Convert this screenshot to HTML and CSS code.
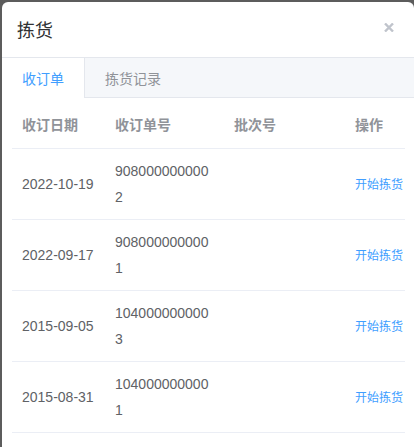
FILE: index.html
```html
<!DOCTYPE html>
<html lang="zh-CN">
<head>
    <meta charset="UTF-8">
    <meta name="viewport" content="width=device-width, initial-scale=1.0">
    <title>拣货</title>
    <link rel="stylesheet" href="styles.css">
</head>
<body>
    <div class="dialog">
        <div class="dialog-header">
            <span class="dialog-title">拣货</span>
            <button class="dialog-close" type="button" aria-label="关闭">
                <svg width="10" height="9" viewBox="0 0 10 9">
                    <path d="M1 0.5 L9 8.5 M9 0.5 L1 8.5" stroke="#c0c4cc" stroke-width="2.4" fill="none"/>
                </svg>
            </button>
        </div>

        <div class="tabs">
            <div class="tab active">收订单</div>
            <div class="tab">拣货记录</div>
        </div>

        <div class="dialog-body">
            <table class="order-table">
                <colgroup>
                    <col class="col-date">
                    <col class="col-no">
                    <col class="col-batch">
                    <col class="col-op">
                </colgroup>
                <thead>
                    <tr>
                        <th>收订日期</th>
                        <th>收订单号</th>
                        <th>批次号</th>
                        <th>操作</th>
                    </tr>
                </thead>
                <tbody>
                    <tr>
                        <td>2022-10-19</td>
                        <td>9080000000002</td>
                        <td></td>
                        <td><a class="op-link" href="#">开始拣货</a></td>
                    </tr>
                    <tr>
                        <td>2022-09-17</td>
                        <td>9080000000001</td>
                        <td></td>
                        <td><a class="op-link" href="#">开始拣货</a></td>
                    </tr>
                    <tr>
                        <td>2015-09-05</td>
                        <td>1040000000003</td>
                        <td></td>
                        <td><a class="op-link" href="#">开始拣货</a></td>
                    </tr>
                    <tr>
                        <td>2015-08-31</td>
                        <td>1040000000001</td>
                        <td></td>
                        <td><a class="op-link" href="#">开始拣货</a></td>
                    </tr>
                </tbody>
            </table>
        </div>
    </div>
</body>
</html>
```

FILE: styles.css
```css
html, body {
    margin: 0;
    padding: 0;
}
body {
    background-color: #5c5c5c;
    font-family: "Liberation Sans", Arial, "Noto Sans CJK SC", sans-serif;
    color: #606266;
    padding: 2px 0 0 2px;
    height: 447px;
    box-sizing: border-box;
    overflow: hidden;
}
.dialog {
    background-color: #fff;
    border-radius: 6px 6px 0 0;
    height: 460px;
    overflow: hidden;
}
.dialog-header {
    height: 56px;
    display: flex;
    align-items: center;
    justify-content: space-between;
    padding: 0 15px;
    border-bottom: 1px solid #e4e7ed;
    box-sizing: border-box;
}
.dialog-title {
    font-size: 18px;
    color: #303133;
    margin-top: -2px;
}
.dialog-close {
    background: none;
    border: none;
    padding: 0;
    margin-right: 5px;
    margin-top: -4px;
    display: flex;
    cursor: pointer;
}
.tabs {
    display: flex;
    height: 40px;
    background-color: #f5f7fa;
    border-bottom: 1px solid #e4e7ed;
    box-sizing: border-box;
    font-size: 14px;
}
.tab {
    padding: 2px 20px 0 20px;
    line-height: 39px;
    color: #909399;
}
.tab.active {
    background-color: #fff;
    color: #409eff;
    border-right: 1px solid #e4e7ed;
    height: 38px;
}
.dialog-body {
    padding: 6px 9px 0 10px;
}
.order-table {
    width: 393px;
    border-collapse: collapse;
    table-layout: fixed;
    font-size: 14px;
}
.col-date { width: 93px; }
.col-no { width: 119px; }
.col-batch { width: 121px; }
.col-op { width: 60px; }
.order-table th,
.order-table td {
    text-align: left;
    padding: 9px 10px;
    line-height: 26px;
    border-bottom: 1px solid #ebeef5;
    word-break: break-all;
    vertical-align: middle;
}
.order-table th {
    padding-top: 8px;
    padding-bottom: 10px;
}
.order-table th:last-child,
.order-table td:last-child {
    padding-right: 0;
}
.order-table th {
    color: #909399;
    font-weight: bold;
}
.op-link {
    color: #409eff;
    font-size: 12px;
    text-decoration: none;
    white-space: nowrap;
}
```
